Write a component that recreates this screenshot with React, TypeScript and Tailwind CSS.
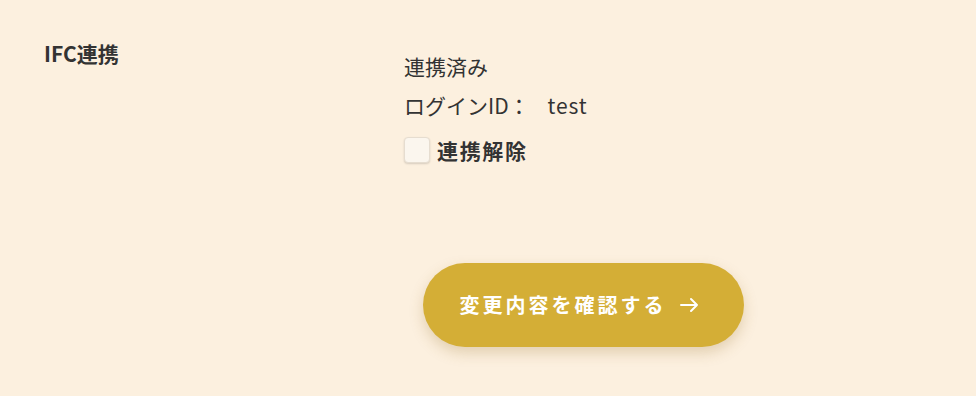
import { useState } from 'react';

const IndexPage = () => {
  const [unlink, setUnlink] = useState(false);

  return (
    <div
      className="w-[976px] h-[396px] bg-[#fcf0df] text-[#333333] overflow-hidden"
      style={{ fontFamily: '"Noto Sans CJK JP", "Noto Sans", sans-serif' }}
    >
      <div className="flex pt-[39px] pl-[44px]">
        <div className="w-[360px] text-[21px] font-bold leading-[28px]">IFC連携</div>
        <div className="flex flex-col pt-[13px]">
          <div className="text-[21px] leading-[28px]">連携済み</div>
          <div className="text-[21px] leading-[28px] mt-[11px]">
            ログインID：<span className="ml-[18px] tracking-[0.04em]">test</span>
          </div>
          <label className="flex items-center mt-[17px] cursor-pointer">
            <input
              type="checkbox"
              className="hidden"
              checked={unlink}
              onChange={(e) => setUnlink(e.target.checked)}
            />
            <span className="w-[26px] h-[26px] rounded-[4px] bg-[#fbf6ee] border border-[#e6ddd0] shadow-[0_1px_2px_rgba(0,0,0,0.15)]" />
            <span className="ml-[7px] text-[21px] font-bold tracking-[0.08em] leading-[28px]">連携解除</span>
          </label>
        </div>
      </div>

      <div className="flex pl-[423px] mt-[99px]">
        <button className="w-[321px] h-[84px] pr-[9px] rounded-full bg-[#d4ae36] text-white text-[20px] font-bold tracking-[0.15em] flex items-center justify-center shadow-[0_6px_14px_rgba(150,110,40,0.25)]">
          変更内容を確認する
          <svg className="ml-[12px]" width="20" height="20" viewBox="0 0 20 20" fill="none" stroke="white" strokeWidth="2" strokeLinecap="round" strokeLinejoin="round">
            <path d="M2 10h16M12 4l6 6-6 6" />
          </svg>
        </button>
      </div>
    </div>
  );
};

export default IndexPage;
